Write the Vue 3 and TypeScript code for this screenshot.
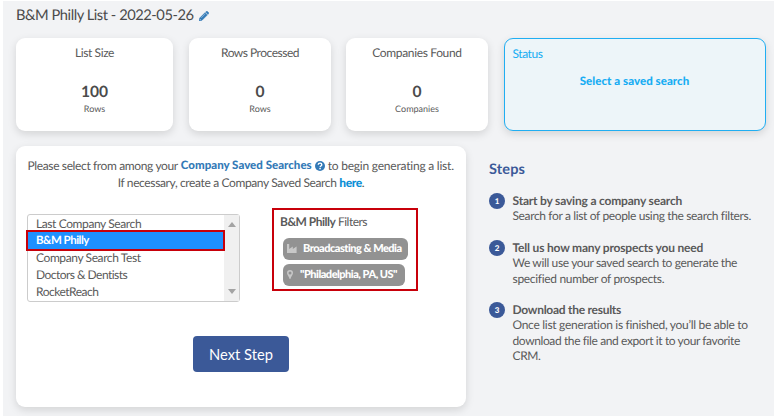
<script setup lang="ts">
interface Stat { label: string; value: string; unit: string; key: string }
interface Step { title: string; lines: string[]; key: string }

const stats: Stat[] = [
  { label: 'List Size', value: '100', unit: 'Rows', key: 'size' },
  { label: 'Rows Processed', value: '0', unit: 'Rows', key: 'rows' },
  { label: 'Companies Found', value: '0', unit: 'Companies', key: 'companies' },
]
const searches: string[] = ['Last Company Search', 'B&M Philly', 'Company Search Test', 'Doctors & Dentists', 'RocketReach']
const selected = 'B&M Philly'
const steps: Step[] = [
  { title: 'Start by saving a company search', lines: ['Search for a list of people using the search filters.'], key: 's1' },
  { title: 'Tell us how many prospects you need', lines: ['We will use your saved search to generate the', 'specified number of prospects.'], key: 's2' },
  { title: 'Download the results', lines: ['Once list generation is finished, you’ll be able to', 'download the file and export it to your favorite', 'CRM.'], key: 's3' },
]
</script>

<template>
  <div class="page">
    <header class="title">
      <h1>B&amp;M Philly List - 2022-05-26</h1>
      <svg class="pencil" viewBox="0 0 10 10"><path d="M0 10 .7 7 6 1.7 8.3 4 3 9.3ZM6.6 1.1 7.5.3Q8 0 8.4.4L9.6 1.6Q10 2 9.7 2.4L8.9 3.4Z" fill="#337ab7" stroke="#337ab7" stroke-width=".5" /><path d="M1 8 2 9M2.3 6.8 6 3.1" stroke="#d5e4f1" stroke-width=".5" /></svg>
    </header>

    <section class="stats">
      <article v-for="s in stats" :key="s.key" class="card stat" :class="s.key">
        <span class="label">{{ s.label }}</span>
        <strong>{{ s.value }}</strong>
        <small>{{ s.unit }}</small>
      </article>
      <article class="card status">
        <span class="label">Status</span>
        <strong>Select a saved search</strong>
      </article>
    </section>

    <section class="main">
      <div class="card panel">
        <p class="intro first"><span>Please select from among your </span><a><b>Company Saved Searches</b><svg class="help" viewBox="0 0 10 10"><circle cx="5" cy="5" r="5" fill="#337ab7" /><path d="M3.2 3.8C3.3 1.5 6.8 1.6 6.8 3.7 6.8 5 5.2 4.9 5.1 6.1" fill="none" stroke="#fff" stroke-width="1.4" /><rect x="4.3" y="6.9" width="1.5" height="1.4" fill="#fff" /></svg></a><span class="tail">to begin generating a list.</span></p>
        <p class="intro second">If necessary, create a Company Saved Search <b>here</b>.</p>

        <div class="choose">
          <div class="listbox">
            <ul>
              <li v-for="(s, i) in searches" :key="s" :class="['o' + i, { on: s === selected }]"><span>{{ s }}</span></li>
            </ul>
            <div class="scroll">
              <svg viewBox="0 0 8 5"><path d="M0 5 4 0 8 5Z" fill="#a3a3a3" /></svg>
              <svg viewBox="0 0 8 5"><path d="M0 0H8L4 5Z" fill="#a3a3a3" /></svg>
            </div>
          </div>
          <div class="filters">
            <p><b>B&amp;M Philly</b> Filters</p>
            <div class="tag industry">
              <svg viewBox="0 0 10 9"><path d="M0 9V0H2.2V5L5.8 2.6V5L9.6 2.6V9Z" fill="#c8c8c8" /></svg>
              <span>Broadcasting &amp; Media</span>
            </div>
            <div class="tag place">
              <svg viewBox="0 0 6 9"><path fill-rule="evenodd" d="M3 0A3 3 0 0 1 6 3C6 4.6 4 6.5 3.4 9H2.6C2 6.5 0 4.6 0 3A3 3 0 0 1 3 0ZM3 1.5A1.5 1.5 0 1 0 3 4.5 1.5 1.5 0 0 0 3 1.5Z" fill="#c8c8c8" /></svg>
              <span>"Philadelphia, PA, US"</span>
            </div>
          </div>
        </div>
        <button class="next"><span>Next Step</span></button>
      </div>

      <aside class="steps">
        <h2>Steps</h2>
        <div v-for="(s, i) in steps" :key="s.key" class="step" :class="s.key">
          <i>{{ i + 1 }}</i>
          <div>
            <b>{{ s.title }}</b>
            <span v-for="(l, n) in s.lines" :key="l" :class="'l' + n">{{ l }}</span>
          </div>
        </div>
      </aside>
    </section>
  </div>
</template>

<style>
body { margin: 0; background: #fff; }
</style>

<style scoped>
* { box-sizing: border-box; }
.page { width: 771px; height: 415px; margin: 1px 3px 0; padding: 4px 0 0 13px; background: #f2f3f5; overflow: hidden; font-family: Lato, sans-serif; font-size: 12px; color: #5a5a5a; white-space: nowrap; text-rendering: geometricPrecision; }
p, h1, h2, ul { margin: 0; padding: 0; list-style: none; }
svg { flex: none; }
.title { display: flex; height: 33px; }
h1 { font-size: 14.7px; line-height: 20px; font-weight: 400; color: #4b4b4b; letter-spacing: -.46px; }
.pencil { width: 10px; height: 10px; margin: 6px 0 0 5px; }
.card { background: #fff; border-radius: 9px; box-shadow: 0 3px 9px rgba(0, 0, 0, .13); }
.stats { display: flex; height: 93px; }
.stat { width: 142px; margin-right: 15px; display: flex; flex-direction: column; align-items: center; }
.stat.size { width: 157px; margin-right: 16px; }
.stat.companies { width: 142px; margin-right: 15.5px; }
.label { line-height: 16px; margin-top: 7px; letter-spacing: -.4px; }
.rows .label { letter-spacing: -.5px; }
.companies .label { letter-spacing: -.35px; }
.stat strong { font-size: 15.6px; line-height: 20px; margin-top: 21px; color: #4b4b4b; }
.stat small { font-size: 9px; line-height: 12px; margin-top: 1px; }
.status { width: 262px; border: 1px solid #20aef2; background: #edf5f9; color: #18adf3; display: flex; flex-direction: column; }
.status .label { margin-left: 8px; letter-spacing: -.45px; }
.status strong { align-self: center; line-height: 16px; margin-top: 12px; font-weight: 900; font-size: 11.5px; letter-spacing: .05px; }
.main { display: flex; margin-top: 15px; }
.panel { width: 450px; height: 261px; padding: 11px 11px 0; }
.intro { line-height: 17px; letter-spacing: -.37px; }
.first { display: flex; padding-left: .5px; }
.first a { display: flex; color: #337ab7; margin-left: 3px; }
.first b { font-weight: 900; font-size: 11.5px; letter-spacing: .02px; }
.help { width: 10px; height: 10px; margin: 4px 3px 0; }
.tail { letter-spacing: -.22px; }
.second { text-align: center; }
.second b { color: #0b8fd6; font-weight: 900; }
.choose { display: flex; margin-top: 17px; }
.listbox { width: 213px; height: 88px; margin-top: 6px; border: 1px solid #ccc; border-radius: 3px; display: flex; }
ul { width: 196px; flex: none; }
li { height: 17px; line-height: 17px; padding-left: 8px; letter-spacing: -.4px; }
li.on { position: relative; height: 21px; line-height: 18px; width: 199px; margin: -2px 0 -2px -2px; border: 2px solid #c8000a; background: #1e90ff; color: #fff; font-weight: 700; font-size: 11.5px; letter-spacing: -.5px; }
.o3 { letter-spacing: -.53px; }
.o4 { letter-spacing: -.5px; }
.scroll { flex: 1; background: #f0f0f0; display: flex; flex-direction: column; justify-content: space-between; align-items: center; padding: 7px 0; }
.scroll svg { width: 8px; height: 5px; }
.filters { width: 146px; height: 83px; margin-left: 32px; border: 2px solid #c8000a; padding: 4px 6px; }
.filters p { line-height: 16px; margin-bottom: 7.5px; letter-spacing: -.5px; }
.tag { height: 22px; margin: 0 0 4px 3px; border-radius: 6px; background: #929292; display: flex; align-items: center; color: #fff; font-weight: 900; font-size: 11px; letter-spacing: -.5px; }
.industry { width: 125px; padding-left: 4px; }
.industry svg { width: 10px; height: 9px; margin-right: 6px; }
.place { width: 122px; padding-left: 4px; }
.place svg { width: 6px; height: 9px; margin-right: 7px; }
.next { display: flex; align-items: center; justify-content: center; width: 96px; height: 36px; margin: 34px 0 0 166px; padding: 0; border: 0; border-radius: 4px; background: #3b5998; color: #fff; font: 400 14.7px Lato, sans-serif; }
.steps { margin-left: 23px; padding-top: 14px; }
h2 { font-size: 14.5px; line-height: 20px; color: #3b5998; margin-bottom: 13px; letter-spacing: .15px; }
.step { display: flex; }
.step i { width: 16px; height: 16px; border-radius: 50%; background: #3b5998; color: #fff; font: 900 8px/16px Lato, sans-serif; text-align: center; margin-right: 7.5px; }
.step div { display: flex; flex-direction: column; align-items: flex-start; line-height: 15.5px; margin-top: -.5px; letter-spacing: -.36px; }
.step b { letter-spacing: -.19px; }
.s1 { height: 47px; }
.s2 { height: 62px; }
.s2 .l1 { letter-spacing: -.32px; }
.s3 b { letter-spacing: -.27px; }
.s3 .l0 { letter-spacing: -.29px; }
.s3 .l1 { letter-spacing: -.39px; }
</style>
